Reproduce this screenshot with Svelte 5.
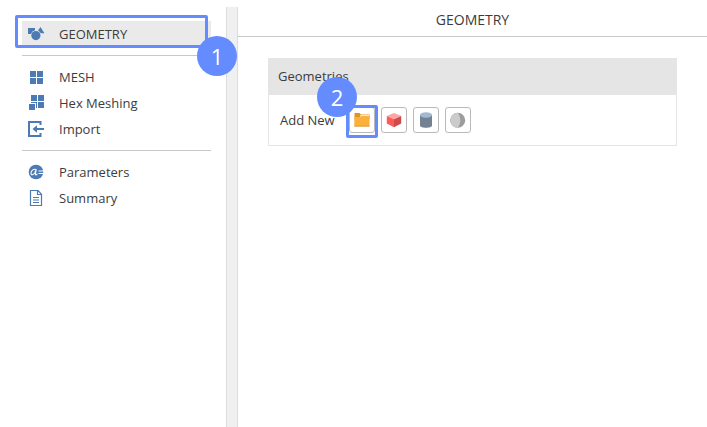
<script>
  const groups = [
    [{ id: 'geometry', label: 'GEOMETRY' }],
    [
      { id: 'mesh', label: 'MESH' },
      { id: 'hex', label: 'Hex Meshing' },
      { id: 'import', label: 'Import' }
    ],
    [
      { id: 'parameters', label: 'Parameters' },
      { id: 'summary', label: 'Summary' }
    ]
  ];
  const shapes = [
    { id: 'file', label: 'From file' },
    { id: 'box', label: 'Box' },
    { id: 'cylinder', label: 'Cylinder' },
    { id: 'sphere', label: 'Sphere' }
  ];
  let active = $state('geometry');
</script>

<div class="app">
  <nav class="sidebar">
    {#each groups as group}
      <ul>
        {#each group as item}
          <li>
            <a
              href="#{item.id}"
              class:active={active === item.id}
              onclick={() => (active = item.id)}
            >
              <svg class="icon" viewBox="0 0 18 18" aria-hidden="true">
                {#if item.id === 'geometry'}
                  <path d="M1 3h7v2.200a5.200 5.200 0 0 0-4 3.800H1z" />
                  <path d="M13.500 2L17.400 8.300H13.800A5.500 5.500 0 0 0 11 5.500z" />
                  <circle cx="8.900" cy="10.600" r="4.600" />
                {:else if item.id === 'mesh'}
                  <path d="M3 3h6v6H3zM10 3h6v6h-6zM3 10h6v6H3zM10 10h6v6h-6z" />
                {:else if item.id === 'hex'}
                  <path d="M4 1h6v6H4zM11 1h6v6h-6zM11 8h6v6h-6zM2 10h6v6H2z" />
                  <path d="M4 8h6v6H9V9H4z" />
                {:else if item.id === 'import'}
                  <path class="line thick" d="M13.500 5V2H2v14h11.500v-3" />
                  <path d="M5.500 9L10 5.200V8h7v2h-7v2.800z" />
                {:else if item.id === 'parameters'}
                  <circle cx="9" cy="9" r="7.300" />
                  <path class="glyph" d="M9.300 6.500C6.300 5.500 4 8 4 10.300c0 2.300 2.300 1.900 3.900-.5L9.300 6.500l-1 4.500c0 1.300 1.300 1 2-.2M11.500 8H17M11.500 10.500H17" />
                {:else}
                  <path class="line" d="M3.500 1.500h7.500l3.500 3.700v11.300h-11zM10.500 1.500V5.500h4M6 8.500h6M6 11h6M6 13.500h6" />
                {/if}
              </svg>
              <span>{item.label}</span>
            </a>
          </li>
        {/each}
      </ul>
    {/each}
    <span class="frame nav-frame"></span>
    <span class="step nav-step">1</span>
  </nav>

  <div class="splitter"></div>

  <main>
    <h1>GEOMETRY</h1>
    <section class="card">
      <h2>Geometries</h2>
      <div class="tools">
        <span class="caption">Add New</span>
        {#each shapes as shape}
          <div class="tool">
            <button type="button" aria-label={shape.label}>
              <svg viewBox="0 0 18 18" aria-hidden="true">
                {#if shape.id === 'file'}
                  <path fill="#e09425" d="M1.500 2h5l1.500 1.500h8.500V8h-15z" />
                  <path fill="#f3ece0" d="M7.500 4H16v2H7z" />
                  <path fill="#fbb03b" d="M1.300 6H7l1.500-1h8v10H1.300z" />
                  <path fill="#df9a35" d="M1.300 14.700h15.400v1H1.300z" />
                {:else if shape.id === 'box'}
                  <path fill="#ffa3a3" d="M9 2l7.200 3L9 8.300 1.800 5z" />
                  <path fill="#ff5a5a" d="M1.800 5L9 8.300V16.200l-7.200-3.700z" />
                  <path fill="#cf4b4b" d="M16.200 5L9 8.300V16.200l7.200-3.700z" />
                {:else if shape.id === 'cylinder'}
                  <path fill="#738193" d="M3 4v10.500c0 3 12 3 12 0V4z" />
                  <ellipse cx="9" cy="4" rx="6" ry="2.800" fill="#a3b8d3" />
                {:else}
                  <circle cx="8.700" cy="9.300" r="7.500" fill="#9c9c9c" />
                  <path fill="#cbcbcb" d="M8.700 1.800a7.500 7.500 0 0 0 0 15c3.500-4 3.500-11 0-15z" />
                {/if}
              </svg>
            </button>
            {#if shape.id === 'file'}
              <span class="frame tool-frame"></span>
              <span class="step tool-step">2</span>
            {/if}
          </div>
        {/each}
      </div>
    </section>
  </main>
</div>

<style>
  :global(body) {
    margin: 0;
    background: #fff;
  }
  .app {
    box-sizing: border-box;
    display: flex;
    min-height: 100vh;
    padding-top: 7px;
    color: #3c3c3c;
    font: 13px/26px 'Open Sans', 'Noto Sans', sans-serif;
  }
  .sidebar {
    position: relative;
    flex: 0 0 189px;
    padding: 14px 15px 0 22px;
  }
  ul {
    margin: 0;
    padding: 0;
    list-style: none;
  }
  ul + ul {
    margin-top: 8px;
    padding-top: 8px;
    border-top: 1px solid #c8c8c8;
  }
  a {
    display: flex;
    align-items: center;
    gap: 14px;
    height: 26px;
    padding-left: 5px;
    color: inherit;
    text-decoration: none;
  }
  a.active {
    background: #eaeaea;
  }
  .icon {
    width: 18px;
    height: 18px;
    fill: #4b7ab5;
  }
  .line {
    fill: none;
    stroke: #4b7ab5;
    stroke-width: 1.2;
  }
  .thick {
    stroke-width: 2;
  }
  .glyph {
    fill: none;
    stroke: #fff;
    stroke-width: 1.1;
  }
  .splitter {
    flex: 0 0 10px;
    background: #f0f0f0;
    border: solid #dcdcdc;
    border-width: 0 1px;
  }
  main {
    flex: 1;
    min-width: 0;
  }
  h1 {
    margin: 0;
    padding-bottom: 3px;
    border-bottom: 1px solid #c8c8c8;
    font-size: 14px;
    font-weight: 400;
    text-align: center;
  }
  .card {
    margin: 21px 30px 0;
    border: 1px solid #e5e5e5;
  }
  h2 {
    margin: 0;
    padding: 0 9px 2px;
    background: #e5e5e5;
    font-size: 13px;
    font-weight: 400;
    line-height: 34px;
  }
  .tools {
    display: flex;
    align-items: center;
    gap: 6px;
    padding: 12px 11px;
  }
  .caption {
    width: 57px;
    margin-right: 6px;
  }
  .tool {
    position: relative;
    display: flex;
  }
  button {
    display: flex;
    align-items: center;
    justify-content: center;
    width: 26px;
    height: 26px;
    padding: 0;
    border: 1px solid #b9b9b9;
    border-radius: 3px;
    background: #fff;
  }
  button svg {
    flex: none;
    width: 18px;
    height: 18px;
  }
  .frame {
    position: absolute;
    box-sizing: border-box;
    border: 3px solid #648cff;
    border-radius: 2px;
    pointer-events: none;
  }
  .nav-frame {
    top: 8px;
    left: 15px;
    width: 193px;
    height: 33px;
  }
  .tool-frame {
    inset: -2px -3px -5px -3px;
  }
  .step {
    position: absolute;
    z-index: 1;
    width: 40px;
    height: 40px;
    border-radius: 50%;
    background: #648cff;
    color: #fff;
    font-size: 22px;
    line-height: 40px;
    text-align: center;
    pointer-events: none;
  }
  .nav-step {
    top: 29px;
    left: 197px;
  }
  .tool-step {
    top: -30px;
    left: -32px;
  }
</style>
